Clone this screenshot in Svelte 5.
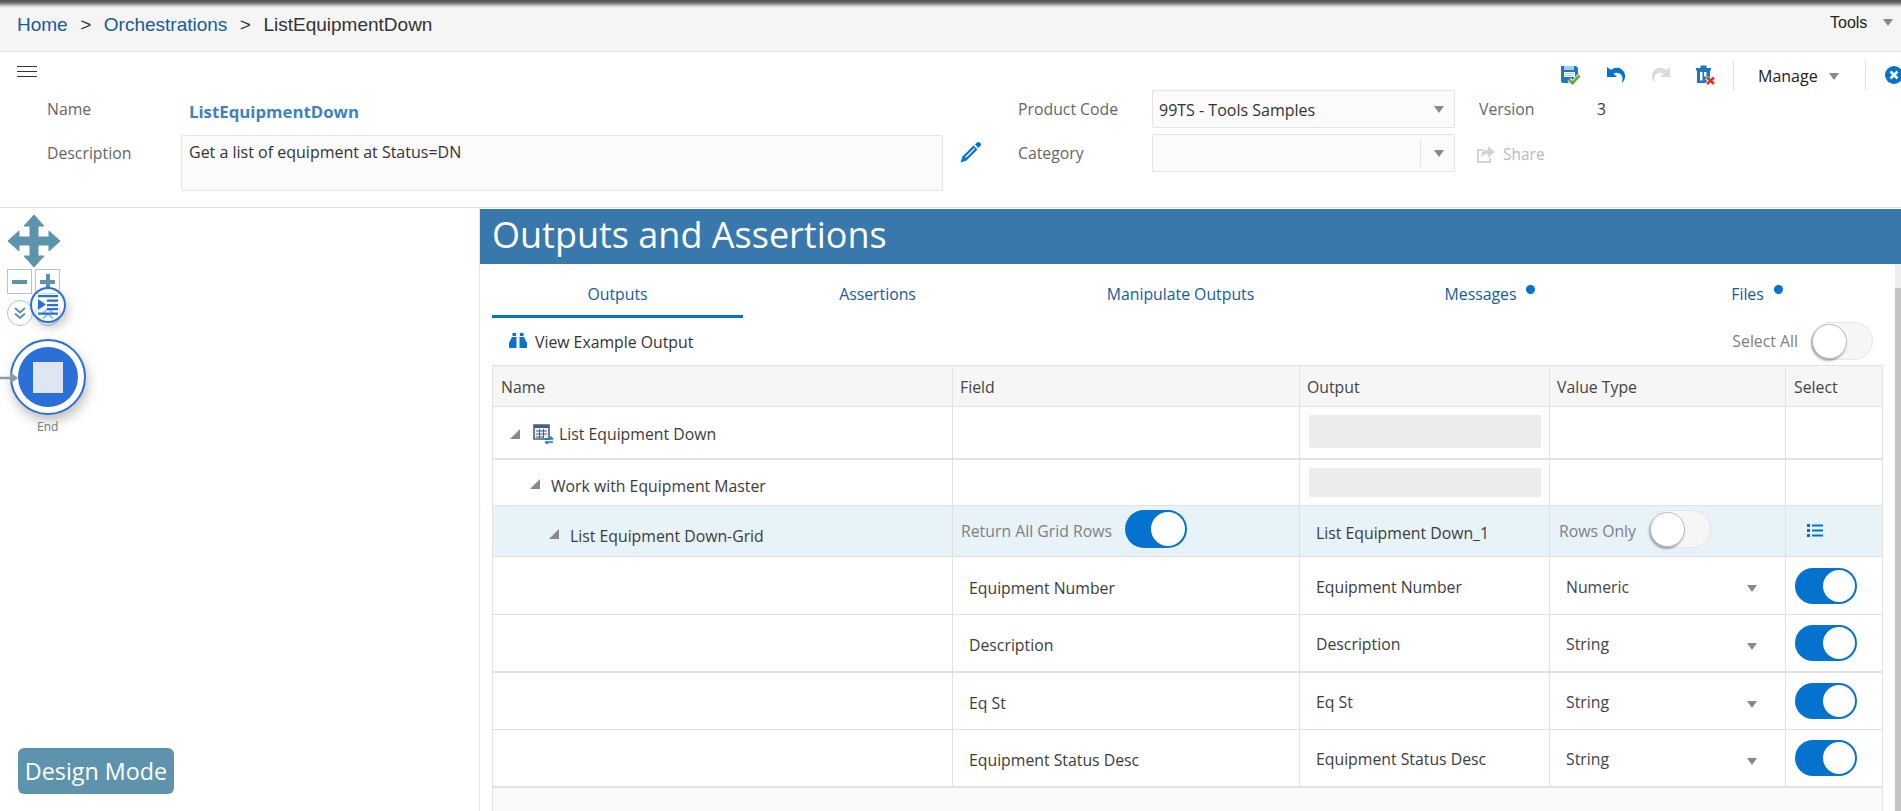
<script>
  const fieldRows = [
    { field: 'Equipment Number', type: 'Numeric', h: 'r4' },
    { field: 'Description', type: 'String', h: 'r5' },
    { field: 'Eq St', type: 'String', h: 'r6' },
    { field: 'Equipment Status Desc', type: 'String', h: 'r7' }
  ];
  const tabs = [
    { label: 'Outputs', w: 251, active: true },
    { label: 'Assertions', w: 269 },
    { label: 'Manipulate Outputs', w: 337 },
    { label: 'Messages', w: 263, dot: true },
    { label: 'Files', w: 271, dot: true }
  ];
</script>

<div class="page">
  <div class="topshadow"></div>
  <nav class="crumbs">
    <div class="trail">
      <span class="link">Home</span><span class="sep">&gt;</span><span class="link">Orchestrations</span><span class="sep">&gt;</span><span>ListEquipmentDown</span>
    </div>
    <div class="tools">Tools <i class="tri g"></i></div>
  </nav>

  <header class="head">
    <svg class="burger" width="20" height="12" viewBox="0 0 20 12"><path d="M0 .5h20M0 5.500h20M0 10.500h20" stroke="#333" stroke-width="1"/></svg>

    <div class="actions">
      <svg class="ic" width="20" height="20" viewBox="0 0 20 20"><path d="M0 1h15l2 2v12H9v3H2a2 2 0 0 1-2-2z" fill="#1f76c2"/><path d="M3 1h10v4H3z" fill="#a9cdec"/><path d="M3 7h11v5H3z" fill="#fff"/><path d="M4 8.500h9M4 10.500h9" stroke="#a9cdec"/><path d="M8 14.500l3.500 3.500 7-7.500" fill="none" stroke="#fff" stroke-width="4.500"/><path d="M8 14.500l3.500 3.500 7-7.500" fill="none" stroke="#6aa92f" stroke-width="2.700"/></svg>
      <svg class="ic" width="20" height="18" viewBox="0 0 20 18"><path d="M1 1v10h10L7.500 7.500c3-1.500 7-.5 8.500 2.500 1 2.500.5 5-.5 7.500C18.500 15 20 11 18.500 7 16.500 2 10 0 5 4z" fill="#0572ce"/></svg>
      <svg class="ic" width="20" height="18" viewBox="0 0 20 18"><path d="M19 1v10H9l3.500-3.500c-3-1.500-7-.5-8.500 2.500-1 2.500-.5 5 .5 7.500C1.500 15 0 11 1.500 7 3.500 2 10 0 15 4z" fill="#dcdcdc"/></svg>
      <svg class="ic" width="20" height="20" viewBox="0 0 20 20"><path d="M0 3h15v2.500H0zM4.500 .5h6V3h-6zM1 5.500h13V18H1z" fill="#1f76c2"/><path d="M4 7h2.500v8.500H4zM8 7h2.500v4.500H8z" fill="#fff"/><path d="M10.500 12.500l7.500 7M18 12.500l-7.500 7" stroke="#fff" stroke-width="4"/><path d="M11 12.500l7 6.500M18 12.500l-7 6.500" stroke="#e2311d" stroke-width="2.500"/></svg>
      <span class="vr"></span>
      <span class="manage">Manage <i class="tri g"></i></span>
      <span class="vr"></span>
      <svg class="closeic" width="18" height="18" viewBox="0 0 18 18"><circle cx="9" cy="9" r="9" fill="#0572ce"/><path d="M5.500 5.500l7 7M12.500 5.500l-7 7" stroke="#fff" stroke-width="2.600"/></svg>
    </div>

    <div class="form">
      <div class="col-a">
        <div class="line l1"><span class="lab">Name</span><strong class="nm">ListEquipmentDown</strong></div>
        <div class="line l2">
          <span class="lab">Description</span>
          <div class="area">Get a list of equipment at Status=DN</div>
          <svg class="pencil" width="22" height="22" viewBox="0 0 22 22"><path d="M17 1.500a2.500 2.500 0 0 1 3.500 3.500l-2 2L15 3.500z" fill="#0572ce"/><path d="M13.500 4.500L17.500 8.500 6.500 19.500 .5 21.500l2-6z" fill="#0572ce"/><path d="M14.500 7.500l-9 9" stroke="#fff" stroke-width="1.200"/></svg>
        </div>
      </div>
      <div class="col-b">
        <div class="line l1b">
          <span class="lab lab2">Product Code</span>
          <div class="sel"><span class="seltext">99TS - Tools Samples</span><i class="tri g"></i></div>
          <span class="lab ver">Version</span><span class="vernum">3</span>
        </div>
        <div class="line l2b">
          <span class="lab lab2">Category</span>
          <div class="sel cat"><span class="catdiv"></span><i class="tri g"></i></div>
          <span class="share">
            <svg width="20" height="20" viewBox="0 0 20 20"><path d="M1 5h7v2H3v10h10v-3h2v5H1z" fill="#d4d4d4"/><path d="M5 13c0-5 3-7 7-7V2l7 6-7 6v-4c-3 0-5 1-7 3z" fill="#d4d4d4"/></svg>
            Share
          </span>
        </div>
      </div>
    </div>
  </header>

  <main class="body">
    <aside class="canvas">
      <svg class="move" width="52" height="52" viewBox="0 0 52 52"><path d="M26 0l10 11h-6v11h11v-6l11 10-11 10v-6H30v11h6L26 52 16 41h6V30H11v6L0 26l11-10v6h11V11h-6z" fill="#5e93ae" stroke="#5e93ae" stroke-width="1" stroke-linejoin="round"/></svg>
      <div class="zoombox zb1"><span></span></div>
      <div class="zoombox zb2"><span></span><b></b></div>
      <div class="circ c1"><svg width="14" height="14" viewBox="0 0 14 14"><path d="M2 2l5 4.500L12 2M2 7.500l5 4.500 5-4.500" fill="none" stroke="#5e93ae" stroke-width="2"/></svg></div>
      <div class="circ c2"><svg width="14" height="14" viewBox="0 0 14 14"><path d="M2 7l5-4.500L12 7M2 12.500L7 8l5 4.500" fill="none" stroke="#5e93ae" stroke-width="2"/></svg></div>
      <div class="indent"><svg width="22" height="22" viewBox="0 0 22 22"><path d="M1 1h20v2.200H1zM10 5.500h11v2.200H10zM10 10h11v2.200H10zM10 14h11v2.200H10zM1 18.500h20v2.200H1z" fill="#2a70d8"/><path d="M1 5v11l8-5.500z" fill="#2a70d8"/></svg></div>
      <div class="end"><div class="core"><span></span></div></div>
      <svg class="arrow" width="20" height="14" viewBox="0 0 20 14"><path d="M0 7h14" stroke="#8b9aa5" stroke-width="2.500"/><path d="M10 1l8 6-8 6z" fill="#8b9aa5"/></svg>
      <span class="endlab">End</span>
      <button class="mode">Design Mode</button>
    </aside>

    <section class="panel">
      <h1>Outputs and Assertions</h1>
      <div class="inner">
        <div class="tabs">
          {#each tabs as t}
            <div class="tab" class:active={t.active} style="width:{t.w}px">{t.label}{#if t.dot}<i class="dot"></i>{/if}</div>
          {/each}
        </div>
        <div class="tbar">
          <span class="view">
            <svg width="18" height="15" viewBox="0 0 18 15"><path d="M3.500 0h3.500v3H3.500zM11 0h3.500v3H11z" fill="#0572ce"/><path d="M3 4h4.500v11H1a1 1 0 0 1-1-1V10zM10.500 4H15l3 6v4a1 1 0 0 1-1 1h-6.500z" fill="#0572ce"/></svg>
            View Example Output
          </span>
          <span class="selall">Select All <span class="sw off"><b></b></span></span>
        </div>
        <div class="grid">
          <div class="row hd"><div>Name</div><div>Field</div><div>Output</div><div>Value Type</div><div>Select</div></div>

          <div class="row r1 thick">
            <div class="tree t1"><i class="car"></i>
              <svg width="21" height="20" viewBox="0 0 21 20"><path d="M1 1h15v14H1z" fill="#eef2f6" stroke="#45617f" stroke-width="1.600"/><path d="M1 1h15v3H1z" fill="#45617f"/><path d="M3 7h11M3 10h11M3 13h7M6.500 5v9M10.500 5v9" stroke="#45617f"/><path d="M12 15h8M20 15l-3-2.500M12 18h8M12 18l3 2" stroke="#1f76c2" stroke-width="1.500" fill="none"/></svg>
              <span>List Equipment Down</span></div>
            <div></div><div><div class="ph p1"></div></div><div></div><div></div>
          </div>

          <div class="row r2">
            <div class="tree t2"><i class="car"></i><span>Work with Equipment Master</span></div>
            <div></div><div><div class="ph p2"></div></div><div></div><div></div>
          </div>

          <div class="row r3 hl">
            <div class="tree t3"><i class="car"></i><span>List Equipment Down-Grid</span></div>
            <div class="pair"><span class="mut">Return All Grid Rows</span><span class="sw on"><b></b></span></div>
            <div class="out">List Equipment Down_1</div>
            <div class="pair p4"><span class="mut">Rows Only</span><span class="sw off"><b></b></span></div>
            <div class="listic"><svg width="16" height="13" viewBox="0 0 16 13"><path d="M0 0h3v3H0zM5 .5h11v2H5zM0 5h3v3H0zM5 5.500h11v2H5zM0 10h3v3H0zM5 10.500h11v2H5z" fill="#0572ce"/></svg></div>
          </div>

          {#each fieldRows as r, i}
            <div class="row {r.h}" class:thick={i === 1 || i === 3}>
              <div></div>
              <div class="fieldc">{r.field}</div>
              <div class="out up">{r.field}</div>
              <div class="typec up">{r.type}<i class="tri g"></i></div>
              <div class="swc"><span class="sw on sm"><b></b></span></div>
            </div>
          {/each}
          <div class="foot"></div>
        </div>
      </div>
      <div class="scroll"></div>
    </section>
  </main>
</div>

<style>
  :global(body) { margin: 0; overflow: hidden; background: #fff; }
  .page { width: 1901px; height: 811px; overflow: hidden; font-family: "Open Sans", "Noto Sans", sans-serif; color: #3c3c3c; font-size: 15.800px; }
  i { display: inline-block; font-style: normal; }
  .tri { width: 0; height: 0; border-left: 5.500px solid transparent; border-right: 5.500px solid transparent; border-top: 7px solid #888; }

  .topshadow { height: 8px; background: linear-gradient(#4f4f4f 0, #6e6e6e 35%, #c9c9c9 70%, #f5f5f6 100%); }
  .crumbs { height: 43px; background: #f5f5f6; border-bottom: 1px solid #dfe1e4; display: flex; justify-content: space-between; align-items: flex-start; font-family: "Liberation Sans", sans-serif; }
  .trail { font-size: 19px; line-height: 34px; padding-left: 17px; display: flex; color: #333; }
  .link { color: #145c9e; }
  .sep { margin: 0 12.500px; }
  .tools { font-size: 16px; line-height: 29px; padding-right: 4px; color: #222; display: flex; align-items: center; gap: 16px; width: 67px; }
  .tools .tri { flex: none; }

  .head { height: 155px; position: relative; border-bottom: 1px solid #dfe1e4; }
  .burger { position: absolute; left: 17px; top: 14px; }
  .actions { position: absolute; right: 0; top: 8px; height: 30px; display: flex; align-items: center; width: 340px; overflow: hidden; }
  .ic { margin-right: 25px; flex: none; }
  .vr { width: 1px; height: 30px; background: #e0e0e0; flex: none; margin-left: -8px; }
  .manage { color: #222; font-size: 16px; margin-left: 24px; margin-right: 30px; padding-top: 2px; display: inline-flex; align-items: center; gap: 11px; flex: none; width: 85px; }
  .closeic { margin-left: 19px; flex: none; }

  .form { position: absolute; left: 0; top: 38px; right: 0; display: flex; }
  .col-a { width: 1018px; }
  .col-b { flex: 1; }
  .line { display: flex; }
  .lab { color: #666; }
  .l1 { height: 45px; padding-left: 47px; }
  .l1 .lab { width: 142px; line-height: 38px; }
  .nm { color: #3b82c4; font-size: 16.800px; line-height: 44px; font-weight: 700; }
  .l2 { padding-left: 47px; position: relative; }
  .l2 .lab { width: 134px; line-height: 36px; }
  .area { height: 56px; border: 1px solid #e4e4e4; background: #fbfbfb; border-radius: 2px; padding: 5px 7px; box-sizing: border-box; width: 762px; color: #333; line-height: 22px; font-size: 16px; }
  .pencil { margin: 6px 0 0 17px; }
  .lab2 { width: 134px; line-height: 38px; }
  .l1b { height: 44px; }
  .sel { width: 303px; height: 38px; box-sizing: border-box; border: 1px solid #e4e4e4; background: #fbfbfb; border-radius: 2px; display: flex; align-items: center; justify-content: space-between; padding: 0 7px 0 6px; position: relative; color: #333; font-size: 16px; }
  .seltext { padding-top: 2px; }
  .sel .tri { margin-right: 3px; }
  .cat { justify-content: flex-end; }
  .catdiv { position: absolute; right: 33px; top: 4px; bottom: 4px; width: 1px; background: #e4e4e4; }
  .ver { margin-left: 24px; width: 118px; line-height: 38px; }
  .vernum { line-height: 38px; }
  .share { margin-left: 21px; color: #bbb; display: inline-flex; align-items: center; gap: 7px; height: 38px; font-size: 15.500px; padding-top: 1px; }

  .body { display: flex; height: 604px; }
  .canvas { width: 479px; flex: none; border-right: 1px solid #e4e6e8; position: relative; box-sizing: content-box; }
  .move { position: absolute; left: 8px; top: 7px; }
  .zoombox { position: absolute; top: 61px; width: 25px; height: 25px; border: 1px solid #a9c9d6; box-sizing: border-box; }
  .zb1 { left: 7px; } .zb2 { left: 35px; }
  .zoombox span { position: absolute; left: 4px; right: 4px; top: 10px; height: 4px; background: #5e93ae; }
  .zoombox b { position: absolute; top: 4px; bottom: 4px; left: 10px; width: 4px; background: #5e93ae; }
  .circ { position: absolute; top: 92px; width: 26px; height: 26px; border-radius: 50%; border: 1px solid #a9c9d6; display: flex; align-items: center; justify-content: center; background: #fff; box-sizing: border-box; }
  .c1 { left: 7px; } .c2 { left: 35px; }
  .indent { position: absolute; left: 30px; top: 79px; width: 36px; height: 36px; box-sizing: border-box; border: 2.500px solid #2a70d8; border-radius: 50%; background: rgba(255,255,255,.4); display: flex; align-items: center; justify-content: center; box-shadow: 3px 5px 10px rgba(0,0,0,.2); }
  .arrow { position: absolute; left: 0; top: 163px; }
  .end { position: absolute; left: 10px; top: 131px; width: 76px; height: 76px; box-sizing: border-box; border: 2px solid #2a70d8; border-radius: 50%; display: flex; align-items: center; justify-content: center; background: #fff; box-shadow: 2px 6px 12px rgba(0,0,0,.25); }
  .core { width: 60px; height: 60px; border-radius: 50%; background: #2a70d8; display: flex; align-items: center; justify-content: center; }
  .core span { width: 30px; height: 31px; background: #dfe5f1; }
  .endlab { position: absolute; left: 37px; top: 210px; font-size: 12px; color: #777; }
  .mode { position: absolute; left: 18px; top: 540px; width: 156px; height: 46px; border: 0; border-radius: 6px; background: #5e93ae; color: #fff; font: 23.300px "Open Sans", sans-serif; padding: 0; }

  .panel { flex: 1; position: relative; min-width: 0; }
  h1 { margin: 1px 0 0; height: 55px; background: #3878ad; color: #fff; font-weight: 400; font-size: 36px; line-height: 52px; padding-left: 12px; }
  .inner { padding: 0 0 0 12px; width: 1391px; }
  .tabs { display: flex; height: 54px; }
  .tab { box-sizing: border-box; text-align: center; color: #145c9e; line-height: 60px; border-bottom: 3px solid transparent; position: relative; overflow: hidden; }
  .tab.active { border-bottom-color: #0572ce; }
  .dot { width: 9px; height: 9px; border-radius: 50%; background: #0572ce; position: absolute; margin: 21px 0 0 10px; }
  .tbar { height: 47px; display: flex; justify-content: space-between; align-items: center; padding: 1px 10px 0 17px; box-sizing: border-box; }
  .view { display: inline-flex; align-items: center; gap: 8px; color: #333; }
  .view svg { margin-top: -4px; }
  .selall { display: inline-flex; align-items: center; gap: 13px; color: #808080; margin-top: -3px; }
  .sw { display: inline-block; width: 62px; height: 38px; border-radius: 19px; position: relative; box-sizing: border-box; flex: none; }
  .sw.off { background: #f6f6f6; border: 1px solid #e6e6e6; }
  .sw.off b { position: absolute; left: 0; top: 1px; width: 35px; height: 35px; border-radius: 50%; background: #fff; border: 1px solid #bbb; box-sizing: border-box; box-shadow: -1px 2px 2px rgba(0,0,0,.3); }
  .sw.on { background: #0572ce; }
  .sw.on b { position: absolute; right: 2px; top: 2px; width: 34px; height: 34px; border-radius: 50%; background: #fff; }
  .sw.sm { height: 36px; }
  .sw.sm b { width: 32px; height: 32px; }

  .grid { border-left: 1px solid #e2e2e2; border-right: 1px solid #e2e2e2; border-top: 1px solid #e2e2e2; box-sizing: border-box; }
  .row { display: grid; grid-template-columns: 459px 347px 250px 236px 1fr; border-bottom: 1px solid #e2e2e2; box-sizing: border-box; }
  .row > div { border-left: 1px solid #e2e2e2; display: flex; align-items: center; min-width: 0; box-sizing: border-box; }
  .row > div:first-child { border-left: 0; }
  .hd { height: 41px; background: #f6f6f6; color: #444; }
  .hd > div { padding-left: 8px; padding-top: 2px; }
  .hd > div:nth-child(2), .hd > div:nth-child(3), .hd > div:nth-child(4) { padding-left: 7px; }
  .r1 { height: 53px; } .r2 { height: 46px; } .r3 { height: 51px; }
  .r4 { height: 58px; } .r5 { height: 58px; } .r6 { height: 57px; } .r7 { height: 58px; }
  .thick { border-bottom-width: 2px; }
  .hl { background: #e7f2f9; }
  .tree { gap: 9px; }
  .t1 { padding-left: 17px; gap: 11px; padding-top: 2px; }
  .t1 span { margin-left: -6px; }
  .t2 { padding-left: 37px; padding-top: 6px; }
  .t2 .car { margin-top: -3px; }
  .t3 { padding-left: 56px; padding-top: 9px; }
  .t3 .car { margin-top: -4px; }
  .car { width: 0; height: 0; border-left: 10px solid transparent; border-bottom: 10px solid #888; margin-right: 2px; }
  .ph { height: 33px; width: 232px; margin-left: 9px; background: #ececec; border-radius: 2px; margin-top: -2px; }
  .p2 { height: 29px; margin-top: -1px; }
  .pair { padding-left: 8px; gap: 13px; }
  .pair .sw { margin-top: -5px; }
  .p4 { padding-left: 9px; }
  .mut { color: #808080; }
  .out { padding-left: 16px; }
  .r3 .out { padding-top: 4px; }
  .up { padding-top: 2px; }
  .fieldc { padding-left: 16px; padding-top: 4px; }
  .fieldc, .out { white-space: nowrap; }
  .typec { padding-left: 16px; padding-right: 28px; justify-content: space-between; color: #444; }
  .typec .tri { margin-top: 4px; }
  .swc { padding-left: 9px; padding-bottom: 0; }
  .listic { padding-left: 21px; padding-bottom: 2px; }
  .foot { height: 30px; background: #fafafa; }
  .scroll { position: absolute; right: 0; top: 80px; width: 6px; bottom: 0; background: #c4c4c4; box-shadow: 0 -24px 0 #ededed; }
</style>
